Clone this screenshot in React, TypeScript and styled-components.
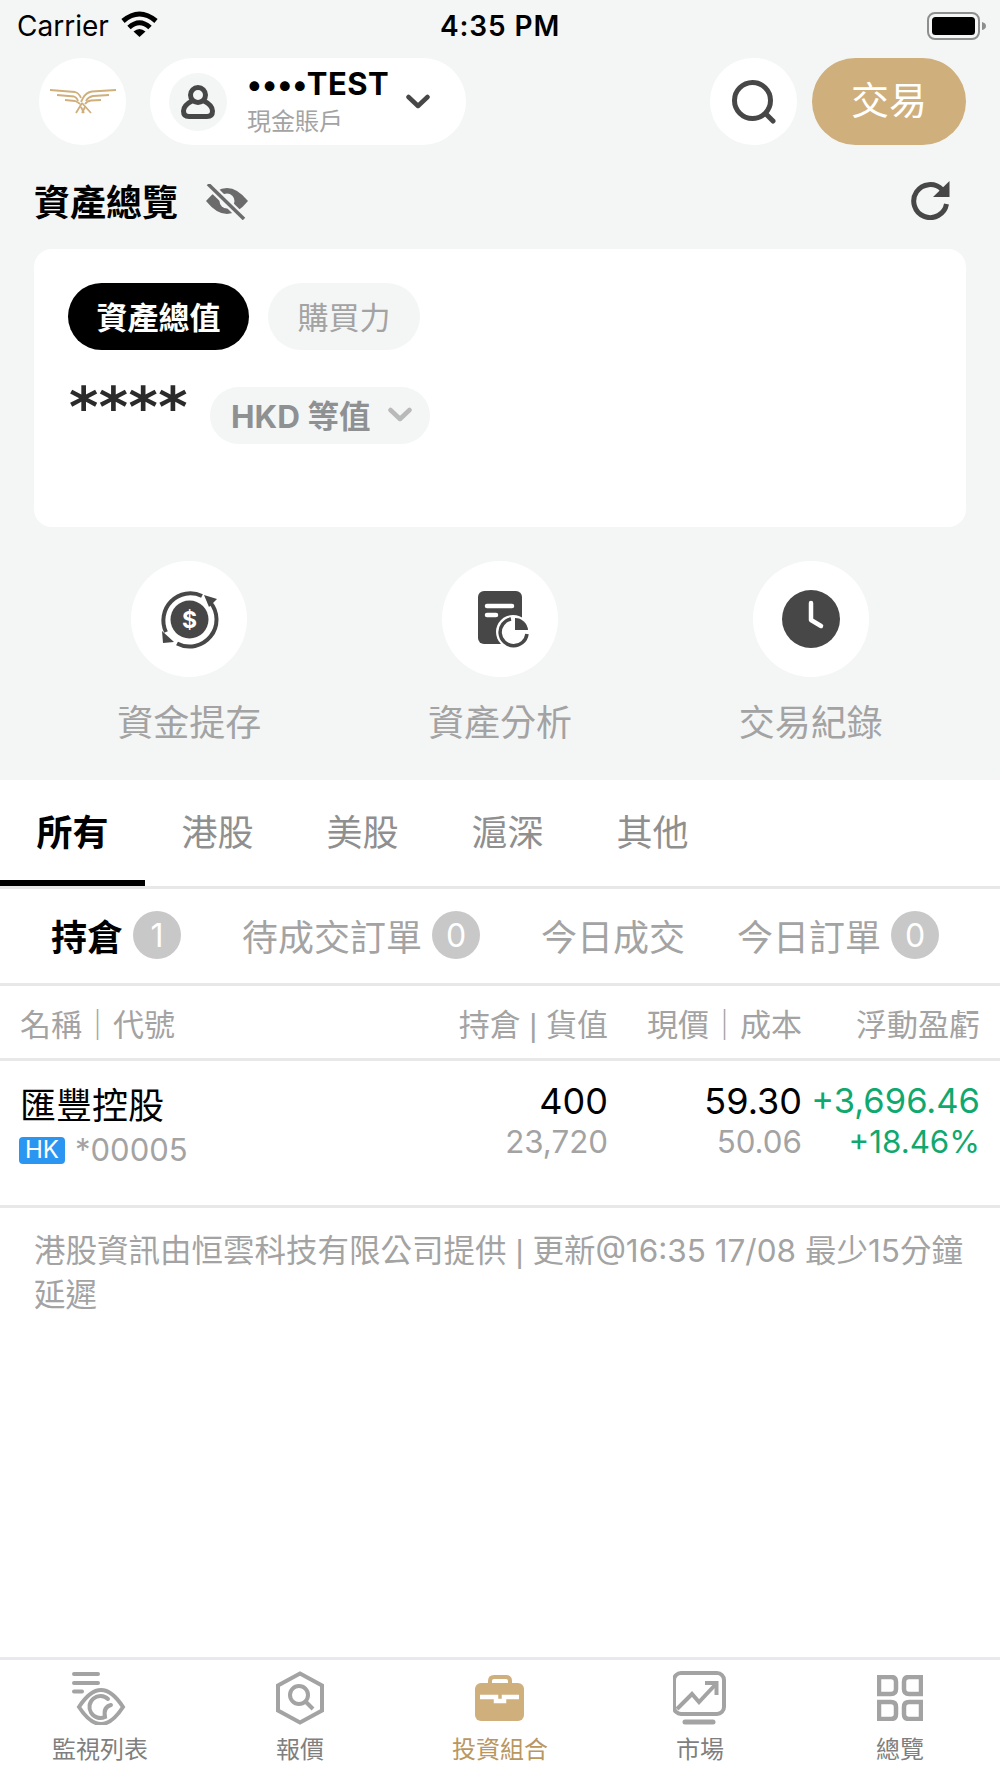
import React from "react";
import styled, { createGlobalStyle } from "styled-components";

const DARK = "#474747";
const GOLD = "#CFAF7C";
const GREY = "#A3A3A3";
const PAGE = "#F4F6F6";

const GlobalStyle = createGlobalStyle`
  * {
    box-sizing: border-box;
  }
  html,
  body {
    margin: 0;
    padding: 0;
    background: #fff;
  }
  body {
    font-family: Inter, "Noto Sans CJK TC", sans-serif;
  }
`;

const WifiIcon = () => (
  <svg width="37" height="26" viewBox="0 0 37 26">
    <path d="M2 10 Q18.5 -4 35 10" fill="none" stroke="#000" strokeWidth="5" />
    <path d="M8 16.5 Q18.5 7 29 16.5" fill="none" stroke="#000" strokeWidth="5" />
    <path d="M12.5 20.5 Q18.5 15.5 24.5 20.5 L18.5 26 Z" fill="#000" />
  </svg>
);

const BatteryIcon = () => (
  <svg width="60" height="28" viewBox="0 0 60 28">
    <rect x="1" y="1" width="51" height="26" rx="7" fill="none" stroke="#8E8E8E" strokeWidth="2" />
    <rect x="5" y="5" width="43" height="18" rx="3.5" fill="#000" />
    <path d="M55 10 Q59 11 59 14 Q59 17 55 18 Z" fill="#8E8E8E" />
  </svg>
);

const LogoIcon = () => (
  <svg width="66" height="25" viewBox="0 0 66 25" fill="none" stroke={GOLD} strokeWidth="1.8">
    <path d="M0 1 L25 3 Q29 4 31 9" />
    <path d="M66 1 L42 2.5 Q36 3.5 33 9 L31 13" />
    <path d="M7 6 L24 7.5 Q27 8.5 28 12" />
    <path d="M59 6 L43 7 Q38 8 36 12" />
    <path d="M15 11 L25 12 Q28 13 30 15" />
    <path d="M51 11 L41 11.5 Q37 12 35 15" />
    <path d="M32 14 L26 24 M32 14 L41 24 M31 18 L34 24 M35 18 L32 24" />
  </svg>
);

const UserIcon = () => (
  <svg width="34" height="34" viewBox="0 0 34 34" fill="none" stroke={DARK} strokeWidth="5">
    <circle cx="17" cy="10" r="7.5" />
    <path d="M11 16 C5 19 2.5 23 2.5 26 C2.5 30 5 31.5 8 31.5 H26 C29 31.5 31.5 30 31.5 26 C31.5 23 29 19 23 16" />
  </svg>
);

const ChevronIcon = ({ color = DARK }: { color?: string }) => (
  <svg width="24" height="15" viewBox="0 0 24 15" fill="none">
    <path d="M2.5 3 L12 12 L21.5 3" stroke={color} strokeWidth="4.5" strokeLinecap="round" strokeLinejoin="round" />
  </svg>
);

const SearchIcon = () => (
  <svg width="44" height="44" viewBox="0 0 44 44" fill="none" stroke={DARK} strokeWidth="5" strokeLinecap="round">
    <circle cx="20.5" cy="20.5" r="18" />
    <path d="M34 34 L41 41" />
  </svg>
);

const EyeOffIcon = () => (
  <svg width="42" height="36" viewBox="0 0 42 36">
    <path d="M0 17 Q21 -9 42 17 Q21 43 0 17 Z" fill="#6B6B6B" />
    <circle cx="21" cy="17" r="7.5" fill={PAGE} />
    <path d="M2 0 L38 35" stroke={PAGE} strokeWidth="8" />
    <path d="M2 0 L38 35" stroke="#6B6B6B" strokeWidth="3.5" />
  </svg>
);

const RefreshIcon = () => (
  <svg width="39" height="39" viewBox="0 0 39 39" fill="none">
    <path d="M31 8.5 A16.5 16.5 0 1 0 35.5 23" stroke={DARK} strokeWidth="5" />
    <path d="M38.5 0 V16 H22 Z" fill={DARK} />
  </svg>
);

const TransferIcon = () => (
  <svg width="59" height="59" viewBox="0 0 59 59" fill="none">
    <circle cx="29.5" cy="29.5" r="19" fill={DARK} />
    <text x="29.5" y="37.5" textAnchor="middle" fontSize="23" fontWeight="700" fill="#fff" fontFamily="Inter, sans-serif">
      $
    </text>
    <path d="M42 6 A27 27 0 0 0 6 42" stroke={DARK} strokeWidth="4" />
    <path d="M17 53.5 A27 27 0 0 0 50 12" stroke={DARK} strokeWidth="4" />
    <path d="M2 41 L14 52 L3 53 Z" fill={DARK} />
    <path d="M44 5 L57 9 L49 17 Z" fill={DARK} />
  </svg>
);

const ReportIcon = () => (
  <svg width="60" height="57" viewBox="-8 0 60 57" fill="none">
    <rect x="0" y="0" width="44" height="53" rx="6" fill={DARK} />
    <path d="M9 15 H34 M9 24 H18" stroke="#fff" strokeWidth="4.5" strokeLinecap="round" />
    <circle cx="35" cy="41" r="17" fill="#fff" />
    <path d="M33 28 A13.5 13.5 0 1 0 49 43" stroke={DARK} strokeWidth="3.5" />
    <path d="M37 27 V39 H50 A13 13 0 0 0 37 27 Z" fill={DARK} />
  </svg>
);

const ClockIcon = () => (
  <svg width="58" height="58" viewBox="0 0 58 58" fill="none">
    <circle cx="29" cy="29" r="29" fill={DARK} />
    <path d="M29 13 V30 L39 36" stroke="#fff" strokeWidth="4.5" strokeLinecap="round" strokeLinejoin="round" />
  </svg>
);

const WatchlistIcon = () => (
  <svg width="56" height="54" viewBox="0 0 56 54" fill="none" stroke={GREY} strokeWidth="4" strokeLinecap="round">
    <path d="M2 3 H26 M2 12 H26 M2 20.5 H10" />
    <path d="M7 36 Q18 19 29 19 Q40 19 51 36 Q40 53 29 53 Q18 53 7 36 Z" />
    <path d="M36 28 A11 11 0 1 0 33 46 Q31 36 39 34" />
  </svg>
);

const QuoteIcon = () => (
  <svg width="48" height="54" viewBox="0 0 48 54" fill="none" stroke={GREY} strokeWidth="4">
    <path d="M24 2.5 L46 14.5 V39.5 L24 51.5 L2 39.5 V14.5 Z" />
    <circle cx="23" cy="24" r="9" />
    <path d="M30 31 L37 38" />
  </svg>
);

const CaseIcon = () => (
  <svg width="50" height="47" viewBox="0 0 50 47" fill="none">
    <path d="M15 10 V6 Q15 2 19 2 H31 Q35 2 35 6 V10" stroke={GOLD} strokeWidth="4" />
    <rect x="0" y="8" width="49" height="38" rx="6" fill={GOLD} />
    <path d="M5 22 H21 V26 H29 V22 H44" stroke="#fff" strokeWidth="4.5" />
  </svg>
);

const MarketIcon = () => (
  <svg width="54" height="54" viewBox="1 0 54 54" fill="none" stroke={GREY} strokeWidth="4">
    <rect x="2" y="2" width="50" height="41" rx="7" />
    <path d="M5 38 L20 23 L27 31 L44 13" />
    <path d="M33 12 H44.5 V24" />
    <path d="M13 51 H41" strokeWidth="5" strokeLinecap="round" />
  </svg>
);

const MoreIcon = () => (
  <svg width="46" height="46" viewBox="0 0 46 46" fill="none" stroke={GREY} strokeWidth="4.5">
    <path d="M2 2 H14 Q19 2 19 7 V14 Q19 19 14 19 H2 Z" />
    <path d="M44 2 H32 Q27 2 27 7 V14 Q27 19 32 19 H44 Z" />
    <path d="M2 27 H14 Q19 27 19 32 V39 Q19 44 14 44 H2 Z" />
    <path d="M44 27 H32 Q27 27 27 32 V39 Q27 44 32 44 H44 Z" />
  </svg>
);

const marketTabs = ["所有", "港股", "美股", "滬深", "其他"];

const orderTabs = [
  { label: "持倉", count: 1, active: true },
  { label: "待成交訂單", count: 0 },
  { label: "今日成交" },
  { label: "今日訂單", count: 0 },
];

const actions = [
  { label: "資金提存", icon: <TransferIcon /> },
  { label: "資產分析", icon: <ReportIcon /> },
  { label: "交易紀錄", icon: <ClockIcon /> },
];

const navItems = [
  { label: "監視列表", icon: <WatchlistIcon /> },
  { label: "報價", icon: <QuoteIcon /> },
  { label: "投資組合", icon: <CaseIcon />, active: true },
  { label: "市場", icon: <MarketIcon /> },
  { label: "總覽", icon: <MoreIcon /> },
];

const App = () => {
  return (
    <Page>
      <GlobalStyle />
      <Overview>
        <StatusBar>
          <Carrier>
            Carrier <WifiIcon />
          </Carrier>
          <Clock>4:35 PM</Clock>
          <Battery>
            <BatteryIcon />
          </Battery>
        </StatusBar>
        <Header>
          <RoundButton>
            <LogoIcon />
          </RoundButton>
          <AccountPill>
            <Avatar>
              <UserIcon />
            </Avatar>
            <AccountText>
              <AccountName>••••TEST</AccountName>
              <AccountType>現金賬戶</AccountType>
            </AccountText>
            <ChevronIcon />
          </AccountPill>
          <HeaderRight>
            <RoundButton>
              <SearchIcon />
            </RoundButton>
            <TradeButton>交易</TradeButton>
          </HeaderRight>
        </Header>
        <SectionHead>
          <SectionTitle>資產總覽</SectionTitle>
          <EyeOffIcon />
          <RefreshWrap>
            <RefreshIcon />
          </RefreshWrap>
        </SectionHead>
        <Card>
          <PillRow>
            <ValuePill $active>資產總值</ValuePill>
            <ValuePill>購買力</ValuePill>
          </PillRow>
          <AmountRow>
            <Masked>****</Masked>
            <CurrencyPill>
              HKD 等值
              <ChevronIcon color="#B9B9B9" />
            </CurrencyPill>
          </AmountRow>
        </Card>
        <Actions>
          {actions.map((action) => (
            <Action key={action.label}>
              <ActionCircle>{action.icon}</ActionCircle>
              <ActionLabel>{action.label}</ActionLabel>
            </Action>
          ))}
        </Actions>
      </Overview>

      <MarketTabs>
        {marketTabs.map((tab, index) => (
          <MarketTab key={tab} $active={index === 0}>
            {tab}
          </MarketTab>
        ))}
      </MarketTabs>

      <OrderTabs>
        {orderTabs.map((tab) => (
          <OrderTab key={tab.label} $active={tab.active}>
            {tab.label}
            {tab.count !== undefined && <Badge>{tab.count}</Badge>}
          </OrderTab>
        ))}
      </OrderTabs>

      <TableHead>
        <HeadCell $left>名稱｜代號</HeadCell>
        <HeadCell>持倉 | 貨值</HeadCell>
        <HeadCell>現價｜成本</HeadCell>
        <HeadCell>浮動盈虧</HeadCell>
      </TableHead>

      <TableRow>
        <NameCell>
          <StockName>匯豐控股</StockName>
          <StockCode>
            <MarketBadge>HK</MarketBadge>
            *00005
          </StockCode>
        </NameCell>
        <ValueCell>
          <MainValue>400</MainValue>
          <SubValue>23,720</SubValue>
        </ValueCell>
        <ValueCell>
          <MainValue>59.30</MainValue>
          <SubValue>50.06</SubValue>
        </ValueCell>
        <ValueCell>
          <MainValue $green>+3,696.46</MainValue>
          <SubValue $green>+18.46%</SubValue>
        </ValueCell>
      </TableRow>

      <Notice>
        港股資訊由恒雲科技有限公司提供 <Pipe>|</Pipe> 更新@16:35 17/08 最少15分鐘
        <br />
        延遲
      </Notice>

      <BottomNav>
        {navItems.map((item) => (
          <NavItem key={item.label} $active={item.active}>
            <NavIcon>{item.icon}</NavIcon>
            {item.label}
          </NavItem>
        ))}
      </BottomNav>
    </Page>
  );
};

const Page = styled.div`
  display: flex;
  flex-direction: column;
  width: 1000px;
  height: 1778px;
  overflow: hidden;
  background: #fff;
`;

const Overview = styled.div`
  height: 780px;
  background: ${PAGE};
`;

const StatusBar = styled.div`
  display: grid;
  grid-template-columns: 1fr auto 1fr;
  align-items: center;
  height: 58px;
  padding: 0 13px 7px 17px;
  color: #000;
`;

const Carrier = styled.div`
  display: flex;
  align-items: center;
  gap: 12px;
  font-size: 28px;
  svg {
    margin-top: -4px;
  }
`;

const Clock = styled.div`
  margin-right: 4px;
  font-size: 28px;
  font-weight: 600;
  letter-spacing: 0.9px;
`;

const Battery = styled.div`
  display: flex;
  justify-content: flex-end;
`;

const Header = styled.div`
  display: flex;
  align-items: center;
  gap: 24px;
  height: 87px;
  padding: 0 34px 0 39px;
`;

const RoundButton = styled.div`
  display: flex;
  align-items: center;
  justify-content: center;
  flex: none;
  width: 87px;
  height: 87px;
  border-radius: 50%;
  background: #fff;
`;

const AccountPill = styled.div`
  display: flex;
  align-items: center;
  width: 316px;
  height: 87px;
  padding: 0 36px 0 19px;
  border-radius: 44px;
  background: #fff;
`;

const Avatar = styled.div`
  display: flex;
  align-items: center;
  justify-content: center;
  flex: none;
  width: 58px;
  height: 58px;
  border-radius: 50%;
  background: ${PAGE};
`;

const AccountText = styled.div`
  flex: 1;
  padding-left: 20px;
`;

const AccountName = styled.div`
  font-size: 31px;
  line-height: 36px;
  font-weight: 700;
  color: #000;
  letter-spacing: 0.5px;
`;

const AccountType = styled.div`
  margin-top: 4px;
  font-size: 24px;
  line-height: 32px;
  color: ${GREY};
`;

const HeaderRight = styled.div`
  display: flex;
  gap: 15px;
  margin-left: auto;
`;

const TradeButton = styled.div`
  display: flex;
  align-items: center;
  justify-content: center;
  width: 154px;
  height: 87px;
  padding-bottom: 8px;
  border-radius: 44px;
  background: ${GOLD};
  color: #fff;
  font-size: 38px;
`;

const SectionHead = styled.div`
  display: flex;
  align-items: center;
  gap: 28px;
  height: 104px;
  padding: 6px 34px 0;
  > svg {
    margin-top: 4px;
  }
`;

const SectionTitle = styled.div`
  font-size: 36px;
  font-weight: 700;
  color: #000;
`;

const RefreshWrap = styled.div`
  display: flex;
  margin-left: auto;
  margin-right: 16px;
`;

const Card = styled.div`
  height: 278px;
  margin: 0 34px;
  padding: 34px;
  border-radius: 18px;
  background: #fff;
`;

const PillRow = styled.div`
  display: flex;
  gap: 19px;
`;

const ValuePill = styled.div<{ $active?: boolean }>`
  display: flex;
  align-items: center;
  justify-content: center;
  height: 67px;
  padding: 0 ${(props) => (props.$active ? "28.5px" : "29.5px")} 2px;
  border-radius: 34px;
  font-size: 31px;
  font-weight: ${(props) => (props.$active ? 700 : 400)};
  background: ${(props) => (props.$active ? "#000" : PAGE)};
  color: ${(props) => (props.$active ? "#fff" : GREY)};
`;

const AmountRow = styled.div`
  display: flex;
  align-items: flex-start;
  gap: 20px;
  margin-top: 37px;
`;

const Masked = styled.div`
  width: 122px;
  height: 50px;
  margin-top: -5px;
  padding-left: 1px;
  font-family: "DejaVu Sans", sans-serif;
  font-size: 56px;
  line-height: 50px;
  font-weight: 700;
  letter-spacing: 0.5px;
  color: #2b2b2b;
  white-space: nowrap;
`;

const CurrencyPill = styled.div`
  display: flex;
  align-items: center;
  gap: 18px;
  height: 57px;
  padding: 0 18px 3px 21px;
  border-radius: 29px;
  background: ${PAGE};
  font-size: 31.5px;
  font-weight: 700;
  color: #8e9092;
`;

const Actions = styled.div`
  display: grid;
  grid-template-columns: repeat(3, 1fr);
  padding: 34px 34px 0;
`;

const Action = styled.div`
  display: flex;
  flex-direction: column;
  align-items: center;
`;

const ActionCircle = styled.div`
  display: flex;
  align-items: center;
  justify-content: center;
  width: 116px;
  height: 116px;
  border-radius: 50%;
  background: #fff;
`;

const ActionLabel = styled.div`
  margin-top: 18px;
  font-size: 36px;
  line-height: 56px;
  color: ${GREY};
`;

const MarketTabs = styled.div`
  display: flex;
  flex: none;
  height: 109px;
  border-bottom: 3px solid #e8e8e8;
`;

const MarketTab = styled.div<{ $active?: boolean }>`
  display: flex;
  align-items: center;
  justify-content: center;
  width: 145px;
  font-size: 36px;
  font-weight: ${(props) => (props.$active ? 700 : 400)};
  color: ${(props) => (props.$active ? "#000" : "#8F8F8F")};
  border-bottom: 6px solid ${(props) => (props.$active ? "#000" : "transparent")};
`;

const OrderTabs = styled.div`
  display: flex;
  flex: none;
  align-items: center;
  gap: 61px;
  height: 97px;
  padding: 0 0 2px 51px;
  border-bottom: 3px solid #e8e8e8;
`;

const OrderTab = styled.div<{ $active?: boolean }>`
  display: flex;
  align-items: center;
  gap: 10px;
  font-size: 36px;
  font-weight: ${(props) => (props.$active ? 700 : 400)};
  color: ${(props) => (props.$active ? "#000" : GREY)};
  &:last-child {
    margin-left: -9px;
  }
`;

const Badge = styled.span`
  display: flex;
  align-items: center;
  justify-content: center;
  width: 48px;
  height: 48px;
  border-radius: 50%;
  background: #c8c8c8;
  color: #fff;
  font-size: 32px;
  font-weight: 400;
`;

const columns = "1fr 170px 194px 178px";

const TableHead = styled.div`
  display: grid;
  flex: none;
  grid-template-columns: ${columns};
  align-items: center;
  height: 75px;
  padding: 0 20px;
  border-bottom: 3px solid #e8e8e8;
`;

const HeadCell = styled.div<{ $left?: boolean }>`
  font-family: "Liberation Sans", "Noto Sans CJK TC", sans-serif;
  font-size: 31px;
  color: ${GREY};
  white-space: nowrap;
  text-align: ${(props) => (props.$left ? "left" : "right")};
`;

const TableRow = styled.div`
  display: grid;
  flex: none;
  grid-template-columns: ${columns};
  height: 147px;
  padding: 17px 20px 0;
  border-bottom: 3px solid #e8e8e8;
`;

const NameCell = styled.div`
  display: flex;
  flex-direction: column;
  padding-top: 3px;
`;

const StockName = styled.div`
  font-size: 36px;
  line-height: 51px;
  color: #000;
`;

const StockCode = styled.div`
  display: flex;
  align-items: center;
  gap: 10px;
  font-size: 31px;
  line-height: 36px;
  color: ${GREY};
`;

const MarketBadge = styled.span`
  display: flex;
  align-items: center;
  justify-content: center;
  width: 46px;
  height: 27px;
  margin-left: -1px;
  border-radius: 4px;
  background: #2a96f2;
  color: #fff;
  font-size: 24px;
`;

const ValueCell = styled.div`
  text-align: right;
  white-space: nowrap;
`;

const MainValue = styled.div<{ $green?: boolean }>`
  font-size: ${(props) => (props.$green ? "34.5px" : "36px")};
  line-height: 46px;
  color: ${(props) => (props.$green ? "#0FA86E" : "#000")};
`;

const SubValue = styled.div<{ $green?: boolean }>`
  font-size: 31.3px;
  line-height: 36px;
  color: ${(props) => (props.$green ? "#0FA86E" : GREY)};
`;

const Notice = styled.div`
  flex: 1;
  padding: 21px 34px 0;
  font-size: 31.5px;
  line-height: 43px;
  color: ${GREY};
`;

const Pipe = styled.span`
  font-family: "Liberation Sans", sans-serif;
`;

const BottomNav = styled.div`
  display: grid;
  flex: none;
  grid-template-columns: repeat(5, 1fr);
  height: 121px;
  padding-top: 10px;
  border-top: 3px solid #e8e8ee;
`;

const NavItem = styled.div<{ $active?: boolean }>`
  display: flex;
  flex-direction: column;
  align-items: center;
  font-size: 24px;
  line-height: 34px;
  color: ${(props) => (props.$active ? "#B9975F" : "#7F7F7F")};
`;

const NavIcon = styled.div`
  display: flex;
  align-items: center;
  justify-content: center;
  height: 56px;
  margin-bottom: 7px;
`;

export default App;
